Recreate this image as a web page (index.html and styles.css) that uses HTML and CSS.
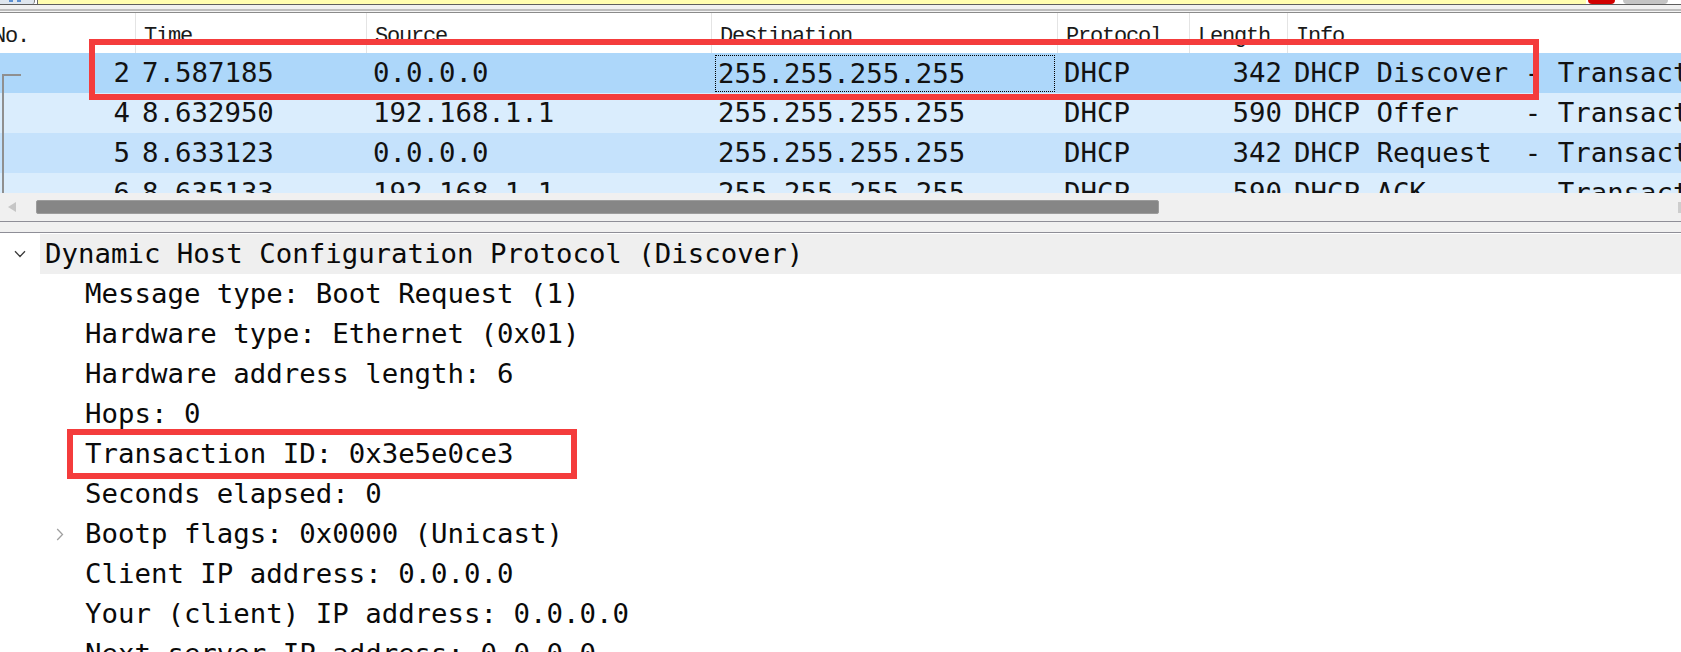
FILE: index.html
```html
<!DOCTYPE html>
<html>
<head>
<meta charset="utf-8">
<title>Wireshark DHCP</title>
<link rel="stylesheet" href="styles.css">
</head>
<body>
<div class="topbar">
  <div class="tb-btn">
    <svg width="20" height="4" viewBox="0 0 20 4"><rect x="2" y="0" width="4" height="2" fill="#5b8fd1"/><rect x="10" y="0" width="4" height="2" fill="#5b8fd1"/></svg>
  </div>
  <div class="filter"></div>
  <div class="pill pill-red"></div>
  <div class="pill pill-grey"></div>
</div>
<div class="sep"></div>

<div class="plist">
  <div class="cols phead">
    <div class="hc hc-no">No.</div>
    <div class="hc">Time</div>
    <div class="hc">Source</div>
    <div class="hc">Destination</div>
    <div class="hc">Protocol</div>
    <div class="hc">Length</div>
    <div class="hc">Info</div>
  </div>
  <div class="pbody">
    <div class="cols prow sel">
      <div class="pc num">2</div>
      <div class="pc">7.587185</div>
      <div class="pc">0.0.0.0</div>
      <div class="pc focus"><div class="focus-in">255.255.255.255</div></div>
      <div class="pc">DHCP</div>
      <div class="pc num">342</div>
      <div class="pc">DHCP Discover - Transaction ID 0x3e5e0ce3</div>
    </div>
    <div class="cols prow r-a">
      <div class="pc num">4</div>
      <div class="pc">8.632950</div>
      <div class="pc">192.168.1.1</div>
      <div class="pc">255.255.255.255</div>
      <div class="pc">DHCP</div>
      <div class="pc num">590</div>
      <div class="pc">DHCP Offer    - Transaction ID 0x3e5e0ce3</div>
    </div>
    <div class="cols prow r-b">
      <div class="pc num">5</div>
      <div class="pc">8.633123</div>
      <div class="pc">0.0.0.0</div>
      <div class="pc">255.255.255.255</div>
      <div class="pc">DHCP</div>
      <div class="pc num">342</div>
      <div class="pc">DHCP Request  - Transaction ID 0x3e5e0ce3</div>
    </div>
    <div class="cols prow r-a">
      <div class="pc num">6</div>
      <div class="pc">8.635133</div>
      <div class="pc">192.168.1.1</div>
      <div class="pc">255.255.255.255</div>
      <div class="pc">DHCP</div>
      <div class="pc num">590</div>
      <div class="pc">DHCP ACK      - Transaction ID 0x3e5e0ce3</div>
    </div>
    <div class="relline"></div>
  </div>
  <div class="redbox rb1"></div>
</div>

<div class="hscroll">
  <div class="arrow-left"></div>
  <div class="thumb"></div>
  <div class="arrow-right"></div>
</div>
<div class="splitter"></div>

<div class="tree">
  <div class="trow">
    <div class="tog"><svg width="12" height="8" viewBox="0 0 12 8"><path d="M1 1.2 L6 6.5 L11 1.2" fill="none" stroke="#3a3a3a" stroke-width="1.3"/></svg></div>
    <div class="tl tl-sel">Dynamic Host Configuration Protocol (Discover)</div>
  </div>
  <div class="trow d1"><div class="tog"></div><div class="tl">Message type: Boot Request (1)</div></div>
  <div class="trow d1"><div class="tog"></div><div class="tl">Hardware type: Ethernet (0x01)</div></div>
  <div class="trow d1"><div class="tog"></div><div class="tl">Hardware address length: 6</div></div>
  <div class="trow d1"><div class="tog"></div><div class="tl">Hops: 0</div></div>
  <div class="trow d1"><div class="tog"></div><div class="tl">Transaction ID: 0x3e5e0ce3</div></div>
  <div class="trow d1"><div class="tog"></div><div class="tl">Seconds elapsed: 0</div></div>
  <div class="trow d1">
    <div class="tog"><svg width="8" height="13" viewBox="0 0 8 13"><path d="M1.2 1 L6.5 6.5 L1.2 12" fill="none" stroke="#a0a0a0" stroke-width="1.3"/></svg></div>
    <div class="tl">Bootp flags: 0x0000 (Unicast)</div>
  </div>
  <div class="trow d1"><div class="tog"></div><div class="tl">Client IP address: 0.0.0.0</div></div>
  <div class="trow d1"><div class="tog"></div><div class="tl">Your (client) IP address: 0.0.0.0</div></div>
  <div class="trow d1"><div class="tog"></div><div class="tl">Next server IP address: 0.0.0.0</div></div>
  <div class="redbox rb2"></div>
</div>
</body>
</html>
```

FILE: styles.css
```css
* { box-sizing: border-box; }

html, body {
  margin: 0;
  height: 652px;
  overflow: hidden;
  background: #fff;
}

body {
  font-family: "DejaVu Sans Mono", "Liberation Mono", monospace;
  font-size: 27.38px;
  color: #121212;
  width: 1681px;
}

/* ---------- top strip ---------- */
.topbar {
  display: flex;
  height: 5px;
  border-bottom: 1px solid #5e5e5e;
}
.tb-btn {
  width: 35px;
  flex: none;
  background: #dfe6ee;
  border-right: 1px solid #7a7a7a;
  border-bottom-right-radius: 3px;
  display: flex;
  justify-content: center;
  overflow: hidden;
}
.filter {
  flex: 1;
  margin-left: 2px;
  background: #fffdb0;
  border-left: 1px solid #666;
}
.pill {
  flex: none;
  border-radius: 0 0 4px 4px;
}
.pill-red { width: 27px; margin-left: 2px; background: #d10000; }
.pill-grey { width: 45px; margin-left: 8px; margin-right: 13px; background: #c4c4c4; }

.sep {
  height: 8px;
  background: linear-gradient(#f0f0f0 0 4px, #bdbdbd 4px 6px, #f4f4f4 6px 7px, #8a8a8a 7px 8px);
}

/* ---------- packet list ---------- */
.plist {
  position: relative;
  overflow: hidden;
}
.cols {
  display: grid;
  grid-template-columns: 135px 231px 345px 346px 132px 98px 1fr;
}
.phead {
  height: 40px;
  background: #fff;
  font-family: "Liberation Mono", monospace;
  font-size: 22px;
  letter-spacing: -1.2px;
  line-height: 25px;
  color: #1a1a1a;
}
.hc {
  padding: 11px 0 0 8px;
  border-left: 1px solid #e4e4e4;
  white-space: pre;
  overflow: hidden;
}
.hc-no {
  border-left: none;
  padding-left: 0;
  text-indent: -7px;
}

.pbody {
  position: relative;
  height: 140px;
  overflow: hidden;
}
.prow {
  height: 40px;
  line-height: 40px;
}
.prow.sel { background: #add7fa; }
.prow.r-a { background: #daedfd; }
.prow.r-b { background: #c5e2fc; }
.pc {
  padding-left: 7px;
  white-space: pre;
  overflow: hidden;
}
.pc.num {
  padding-left: 0;
  padding-right: 5px;
  text-align: right;
}
.pc.focus {
  padding: 2px 2px 1px 4px;
}
.focus-in {
  border: 1px dotted #000;
  height: 37px;
  line-height: 35px;
  padding-left: 2px;
}
.relline {
  position: absolute;
  left: 2px;
  top: 21px;
  bottom: 0;
  width: 19px;
  border-left: 2px solid #8f8f8f;
  border-top: 2px solid #8f8f8f;
}

/* ---------- red annotations ---------- */
.redbox {
  position: absolute;
  border: 6px solid #f43c3c;
  pointer-events: none;
}
.rb1 { left: 89px; top: 26px; width: 1450px; height: 61px; }
.rb2 { left: 67px; top: 196px; width: 510px; height: 50px; }

/* ---------- horizontal scrollbar ---------- */
.hscroll {
  height: 28px;
  background: #f0f0f0;
  display: flex;
  align-items: center;
}
.arrow-left {
  width: 0;
  height: 0;
  margin-left: 8px;
  border-right: 8px solid #c6c6c6;
  border-top: 5px solid transparent;
  border-bottom: 5px solid transparent;
}
.thumb {
  width: 1123px;
  height: 14px;
  margin-left: 20px;
  background: #868686;
  border: 1px solid #9c9c9c;
  border-radius: 2px;
}
.arrow-right {
  margin-left: auto;
  width: 3px;
  height: 11px;
  background: #cdcdcd;
}

.splitter {
  height: 12px;
  background: #f0f0f0;
  border-top: 1px solid #8e8e97;
  border-bottom: 1px solid #8e8e97;
}

/* ---------- detail tree ---------- */
.tree {
  position: relative;
  height: 419px;
  overflow: hidden;
  padding-top: 1px;
  background: #fff;
  color: #0a0a0a;
}
.trow {
  display: flex;
  height: 40px;
  line-height: 40px;
}
.trow.d1 { padding-left: 40px; }
.tog {
  width: 40px;
  flex: none;
  display: flex;
  align-items: center;
  justify-content: center;
}
.tl {
  flex: 1;
  padding-left: 5px;
  white-space: pre;
  overflow: hidden;
}
.tl-sel { background: #efefef; }
```
